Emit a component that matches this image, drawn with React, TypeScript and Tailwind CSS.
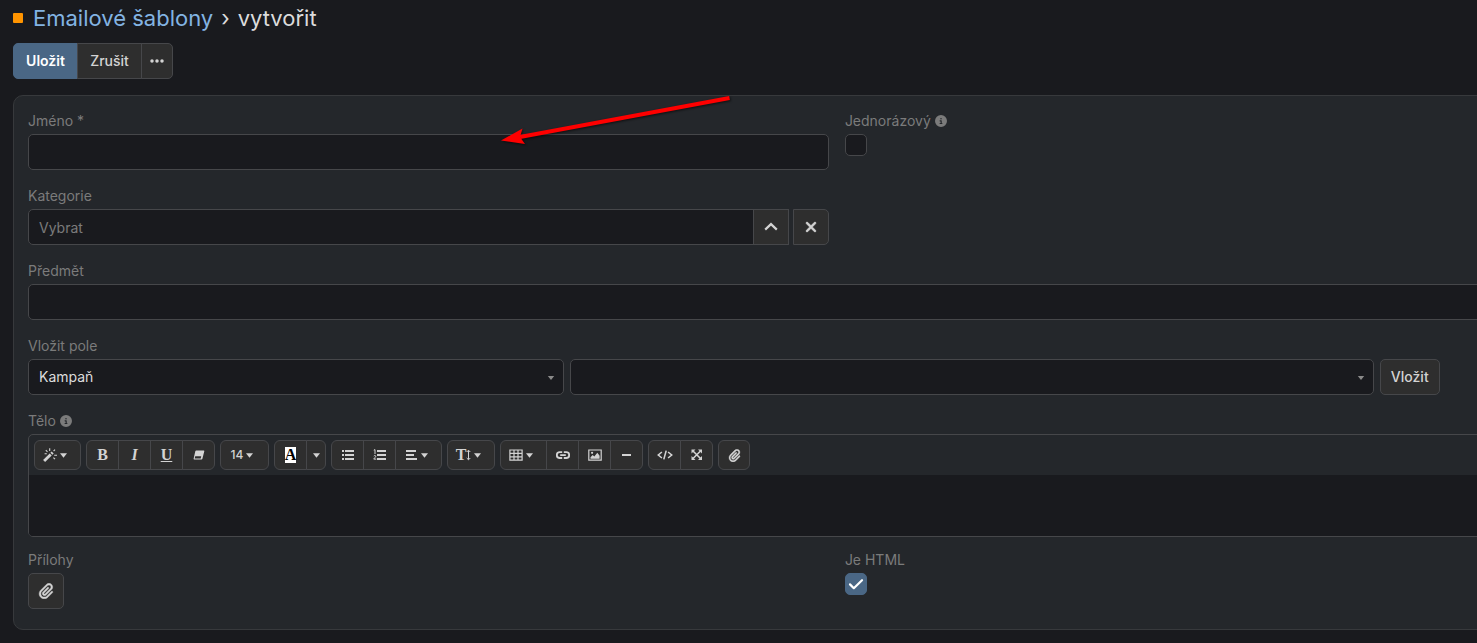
import { useState } from 'react';
import type { ReactNode } from 'react';
import clsx from 'clsx';
import { FaCircleInfo, FaEllipsis, FaPaperclip, FaXmark } from 'react-icons/fa6';

const fieldClass =
  'h-9 w-full min-w-0 border border-[#46474a] bg-[#191a1e] px-2.5 text-sm text-[#dcdcdc] outline-none placeholder:text-[#7b7b7b]';

const buttonClass = 'flex h-9 items-center justify-center border border-[#46474a] bg-[#2e2e2e] text-sm font-medium text-[#d3d3d3]';

const Caret = ({ className }: { className?: string }) => (
  <svg viewBox="0 0 8 5" className={clsx('shrink-0', className ?? 'h-[5px] w-[7px]')} fill="currentColor" aria-hidden="true">
    <path d="M0 0h8L4 5z" />
  </svg>
);

const Svg = ({ children }: { children: ReactNode }) => (
  <svg viewBox="0 0 14 14" className="size-[14px] shrink-0" fill="currentColor" aria-hidden="true">
    {children}
  </svg>
);

const WandIcon = () => (
  <Svg>
    <path d="M0.1 12 6.7 5.4l2 2L2.1 14z" />
    <path d="M7.4 4.8 8.7 3.5l2 2-1.3 1.3z" />
    <path d="M6.7.2v2.9M2.8 2.2l1.7 1.6M10.6 3l1.4-1.4M11.2 7.2h2.8M10.4 9.6l1.6 1.6M1.6 5.7h2.2" stroke="currentColor" strokeWidth="1.1" />
  </Svg>
);

const EraserIcon = () => (
  <Svg>
    <path
      fillRule="evenodd"
      d="M4.2 2.5h7.6c.4 0 .6.3.5.7l-1.9 7.6c-.1.4-.5.7-.9.7H2.2c-.4 0-.7-.3-.6-.7l1.7-7.6c.1-.4.5-.7.9-.7zM3.2 8.3l-.5 2.1h6L9.2 8.3z"
    />
  </Svg>
);

const ListIcon = () => (
  <Svg>
    <path d="M1 2h2v2H1zM1 6h2v2H1zM1 10h2v2H1zM4 2h9v2H4zM4 6h9v2H4zM4 10h9v2H4z" />
  </Svg>
);

const OrderedListIcon = () => (
  <Svg>
    <path d="M4 2h9v2H4zM4 6h9v2H4zM4 10h9v2H4z" />
    <path d="M.8 2.2 2 1.6V6M.8 8c.4-.8 2-.6 2 .3 0 .8-1.3 1-2 2.8h2.500" fill="none" stroke="currentColor" />
  </Svg>
);

const AlignIcon = () => (
  <Svg>
    <path d="M2 2h10v2H2zM2 6h8v2H2zM2 10h11v2H2z" />
  </Svg>
);

const HeightIcon = () => (
  <svg viewBox="0 0 5 14" className="h-[14px] w-[5px] shrink-0" fill="none" stroke="currentColor" aria-hidden="true">
    <path d="M2.5 2.5v9M.7 4l1.8-1.800L4.3 4M.7 10l1.8 1.800L4.3 10" />
  </svg>
);

const TableIcon = () => (
  <Svg>
    <path d="M.9 2h12.2v10.2H.9zM5 2v10.2M9 2v10.2M.9 5.4h12.2M.9 8.8h12.2" fill="none" stroke="currentColor" strokeWidth="1.2" />
  </Svg>
);

const LinkIcon = () => (
  <Svg>
    <path d="M6.2 10H3.7a2.9 2.9 0 0 1 0-5.8h2.5M7.8 4.2h2.5a2.9 2.9 0 0 1 0 5.8H7.8M4.2 7.1h5.6" fill="none" stroke="currentColor" strokeWidth="1.8" />
  </Svg>
);

const ImageIcon = () => (
  <Svg>
    <path d="M.8 2h12.4v10.2H.8z" fill="none" stroke="currentColor" strokeWidth="1.2" />
    <path d="M2.5 10.7V9.2l2.2-2.3 1.6 1.6 3-3.7 2.3 3v2.9z" />
    <circle cx="4.1" cy="4.8" r="1.1" />
  </Svg>
);

const MinusIcon = () => (
  <Svg>
    <path d="M2 6h9v2H2z" />
  </Svg>
);

const CodeIcon = () => (
  <svg viewBox="0 0 16 14" className="h-[14px] w-4 shrink-0" fill="none" stroke="currentColor" strokeWidth="1.6" aria-hidden="true">
    <path d="M4.9 4 1.3 7l3.6 3M11.1 4l3.6 3-3.6 3M9.2 2.6 6.8 11.4" />
  </svg>
);

const ExpandIcon = () => (
  <Svg>
    <path d="M1.5 1.5h4l-4 4zM12 1.5v4l-4-4zM1.5 12V8l4 4zM12 12H8l4-4z" />
    <path d="m3 3 7.5 7.5M10.5 3 3 10.5" stroke="currentColor" strokeWidth="1.6" />
  </Svg>
);

const serifClass = "font-['Liberation_Serif',serif] text-base leading-none font-bold";

type Tool = { label: string; width: string; content: ReactNode; caret?: boolean };

const toolGroups: Tool[][] = [
  [{ label: 'Styl', width: 'w-[47px]', content: <WandIcon />, caret: true }],
  [
    { label: 'Tučné', width: 'w-[33px]', content: <span className={serifClass}>B</span> },
    { label: 'Kurzíva', width: 'w-[33px]', content: <span className={clsx(serifClass, 'italic')}>I</span> },
    { label: 'Podtržené', width: 'w-[33px]', content: <span className={clsx(serifClass, 'underline')}>U</span> },
    { label: 'Odstranit formátování', width: 'w-[33px]', content: <EraserIcon /> },
  ],
  [{ label: 'Velikost písma', width: 'w-[49px]', content: <span>14</span>, caret: true }],
  [
    {
      label: 'Barva písma',
      width: 'w-[33px]',
      content: <span className={clsx(serifClass, 'bg-white text-black')}>A</span>,
    },
    { label: 'Další barvy', width: 'w-[20px]', content: <Caret /> },
  ],
  [
    { label: 'Seznam', width: 'w-[33px]', content: <ListIcon /> },
    { label: 'Číslovaný seznam', width: 'w-[33px]', content: <OrderedListIcon /> },
    { label: 'Odstavec', width: 'w-[47px]', content: <AlignIcon />, caret: true },
  ],
  [
    {
      label: 'Výška řádku',
      width: 'w-[48px]',
      content: (
        <span className="flex items-center">
          <span className={serifClass}>T</span>
          <HeightIcon />
        </span>
      ),
      caret: true,
    },
  ],
  [
    { label: 'Tabulka', width: 'w-[47px]', content: <TableIcon />, caret: true },
    { label: 'Odkaz', width: 'w-[33px]', content: <LinkIcon /> },
    { label: 'Obrázek', width: 'w-[33px]', content: <ImageIcon /> },
    { label: 'Vodorovná čára', width: 'w-[33px]', content: <MinusIcon /> },
  ],
  [
    { label: 'Zdrojový kód', width: 'w-[33px]', content: <CodeIcon /> },
    { label: 'Celá obrazovka', width: 'w-[33px]', content: <ExpandIcon /> },
  ],
  [{ label: 'Příloha', width: 'w-[32px]', content: <FaPaperclip className="size-[13px]" stroke="currentColor" strokeWidth="12" /> }],
];

const Label = ({ htmlFor, children }: { htmlFor: string; children: ReactNode }) => (
  <label htmlFor={htmlFor} className="mb-[3px] flex h-5 items-center gap-1 text-sm text-[#7b7b7b]">
    {children}
  </label>
);

const Checkbox = ({ id, defaultChecked }: { id: string; defaultChecked?: boolean }) => (
  <div className="relative size-[22px]">
    <input
      id={id}
      type="checkbox"
      defaultChecked={defaultChecked}
      className="peer block size-[22px] appearance-none rounded-[5px] border border-[#46474a] bg-[#191a1e] checked:border-[#4a6785] checked:bg-[#4a6785]"
    />
    <svg
      viewBox="0 0 22 22"
      className="pointer-events-none absolute inset-0 hidden size-[22px] text-white peer-checked:block"
      fill="none"
      stroke="currentColor"
      strokeWidth="2.2"
      strokeLinecap="round"
      strokeLinejoin="round"
    >
      <path d="m5 11.4 3.8 3.8L17 7.2" />
    </svg>
  </div>
);

const Select = ({ id, label, className, children }: { id: string; label?: string; className: string; children?: ReactNode }) => (
  <div className={clsx('relative', className)}>
    <select id={id} aria-label={label} className={clsx(fieldClass, 'appearance-none rounded-[5px]')}>
      {children}
    </select>
    <Caret className="pointer-events-none absolute top-[17px] right-[9px] h-1 w-2 text-[#8a8a8a]" />
  </div>
);

const Toolbar = () => (
  <div className="flex gap-[5px] p-[5px]">
    {toolGroups.map((group) => (
      <div key={group[0].label} className="flex">
        {group.map((tool) => (
          <button
            key={tool.label}
            type="button"
            aria-label={tool.label}
            className={clsx(
              'flex h-[30px] shrink-0 items-center justify-center gap-[3px] border border-[#46474a] bg-[#2e2e2e] text-xs font-medium text-[#d3d3d3] not-first:-ml-px first:rounded-l-[6px] last:rounded-r-[6px]',
              tool.width,
              tool.caret && 'pr-[5px]',
            )}
          >
            {tool.content}
            {tool.caret && <Caret />}
          </button>
        ))}
      </div>
    ))}
  </div>
);

const Arrow = () => (
  <svg
    viewBox="0 0 240 56"
    className="pointer-events-none absolute top-[94px] left-[496px] h-14 w-60 drop-shadow-[1px_1px_1px_rgba(0,0,0,0.6)]"
    aria-hidden="true"
  >
    <path d="M233.5 4 24 43" stroke="#fe0000" strokeWidth="4" />
    <path d="M5 46.5 26.5 34.5 24 43l5 7z" fill="#fe0000" />
  </svg>
);

const App = () => {
  const [category, setCategory] = useState('');

  return (
    <div className="relative min-h-screen overflow-hidden bg-[#191a1e] font-[Inter,sans-serif] text-[#dcdcdc]">
      <div className="w-[114%] pt-1 pr-[23px] pb-3 pl-[13px]">
        <h1 className="flex h-7 items-center text-[22px]">
          <span className="mr-2.5 size-2.5 rounded-[1px] bg-[#ff9400]" />
          <a href="#sablony" className="text-[#83b4e3]">Emailové šablony</a>
          <span className="mx-2">›</span>
          <span>vytvořit</span>
        </h1>

        <div className="mt-[11px] flex">
          <button type="button" className="h-9 w-[65px] rounded-l-[5px] border border-[#4a6785] bg-[#4a6785] text-sm font-semibold text-white">
            Uložit
          </button>
          <button type="button" className={clsx(buttonClass, '-ml-px w-[65px]')}>Zrušit</button>
          <button type="button" aria-label="Další" className={clsx(buttonClass, '-ml-px w-8 rounded-r-[5px]')}>
            <FaEllipsis className="size-4" />
          </button>
        </div>

        <form className="mt-4 rounded-[10px] border border-[#37393c] bg-[#24272b] px-[14px] pt-[15px] pb-5">
          <div className="mb-4 grid grid-cols-2 gap-x-4">
            <div>
              <Label htmlFor="name">Jméno *</Label>
              <input id="name" type="text" className={clsx(fieldClass, 'rounded-[5px]')} />
            </div>
            <div>
              <Label htmlFor="oneOff">
                Jednorázový <FaCircleInfo className="size-3" />
              </Label>
              <Checkbox id="oneOff" />
            </div>
          </div>

          <div className="mb-4 grid grid-cols-2 gap-x-4">
            <div>
              <Label htmlFor="category">Kategorie</Label>
              <div className="flex">
                <input
                  id="category"
                  type="text"
                  placeholder="Vybrat"
                  value={category}
                  onChange={(e) => setCategory(e.target.value)}
                  className={clsx(fieldClass, 'rounded-l-[5px]')}
                />
                <button type="button" aria-label="Vybrat" className={clsx(buttonClass, '-ml-px w-9 shrink-0')}>
                  <svg viewBox="0 0 14 14" className="size-[14px]" fill="none" stroke="currentColor" strokeWidth="2.2">
                    <path d="m1.2 9.6 5.8-5.5 5.8 5.5" />
                  </svg>
                </button>
                <button
                  type="button"
                  aria-label="Vymazat"
                  onClick={() => setCategory('')}
                  className={clsx(buttonClass, 'ml-1 w-9 shrink-0 rounded-r-[5px]')}
                >
                  <FaXmark className="size-4" stroke="currentColor" strokeWidth="16" />
                </button>
              </div>
            </div>
          </div>

          <div className="mb-4">
            <Label htmlFor="subject">Předmět</Label>
            <input id="subject" type="text" className={clsx(fieldClass, 'rounded-[5px]')} />
          </div>

          <div className="mb-4">
            <Label htmlFor="entity">Vložit pole</Label>
            <div className="mr-[206px] flex gap-1.5">
              <Select id="entity" className="flex-2">
                <option>Kampaň</option>
              </Select>
              <Select id="field" label="Pole" className="flex-3" />
              <button type="button" className={clsx(buttonClass, 'w-[60px] rounded-[5px]')}>Vložit</button>
            </div>
          </div>

          <div className="mb-[13px]">
            <Label htmlFor="body">
              Tělo <FaCircleInfo className="size-3" />
            </Label>
            <div className="overflow-hidden rounded-[5px] border border-[#46474a]">
              <Toolbar />
              <textarea id="body" className="block h-[61px] w-full resize-none bg-[#191a1e] p-2.5 text-sm outline-none" />
            </div>
          </div>

          <div className="grid grid-cols-2 gap-x-4">
            <div>
              <Label htmlFor="attachments">Přílohy</Label>
              <button id="attachments" type="button" aria-label="Přidat přílohu" className={clsx(buttonClass, 'w-9 rounded-[5px]')}>
                <FaPaperclip className="size-4" stroke="currentColor" strokeWidth="12" />
              </button>
            </div>
            <div>
              <Label htmlFor="isHtml">Je HTML</Label>
              <Checkbox id="isHtml" defaultChecked />
            </div>
          </div>
        </form>
      </div>
      <Arrow />
    </div>
  );
};

export default App;
